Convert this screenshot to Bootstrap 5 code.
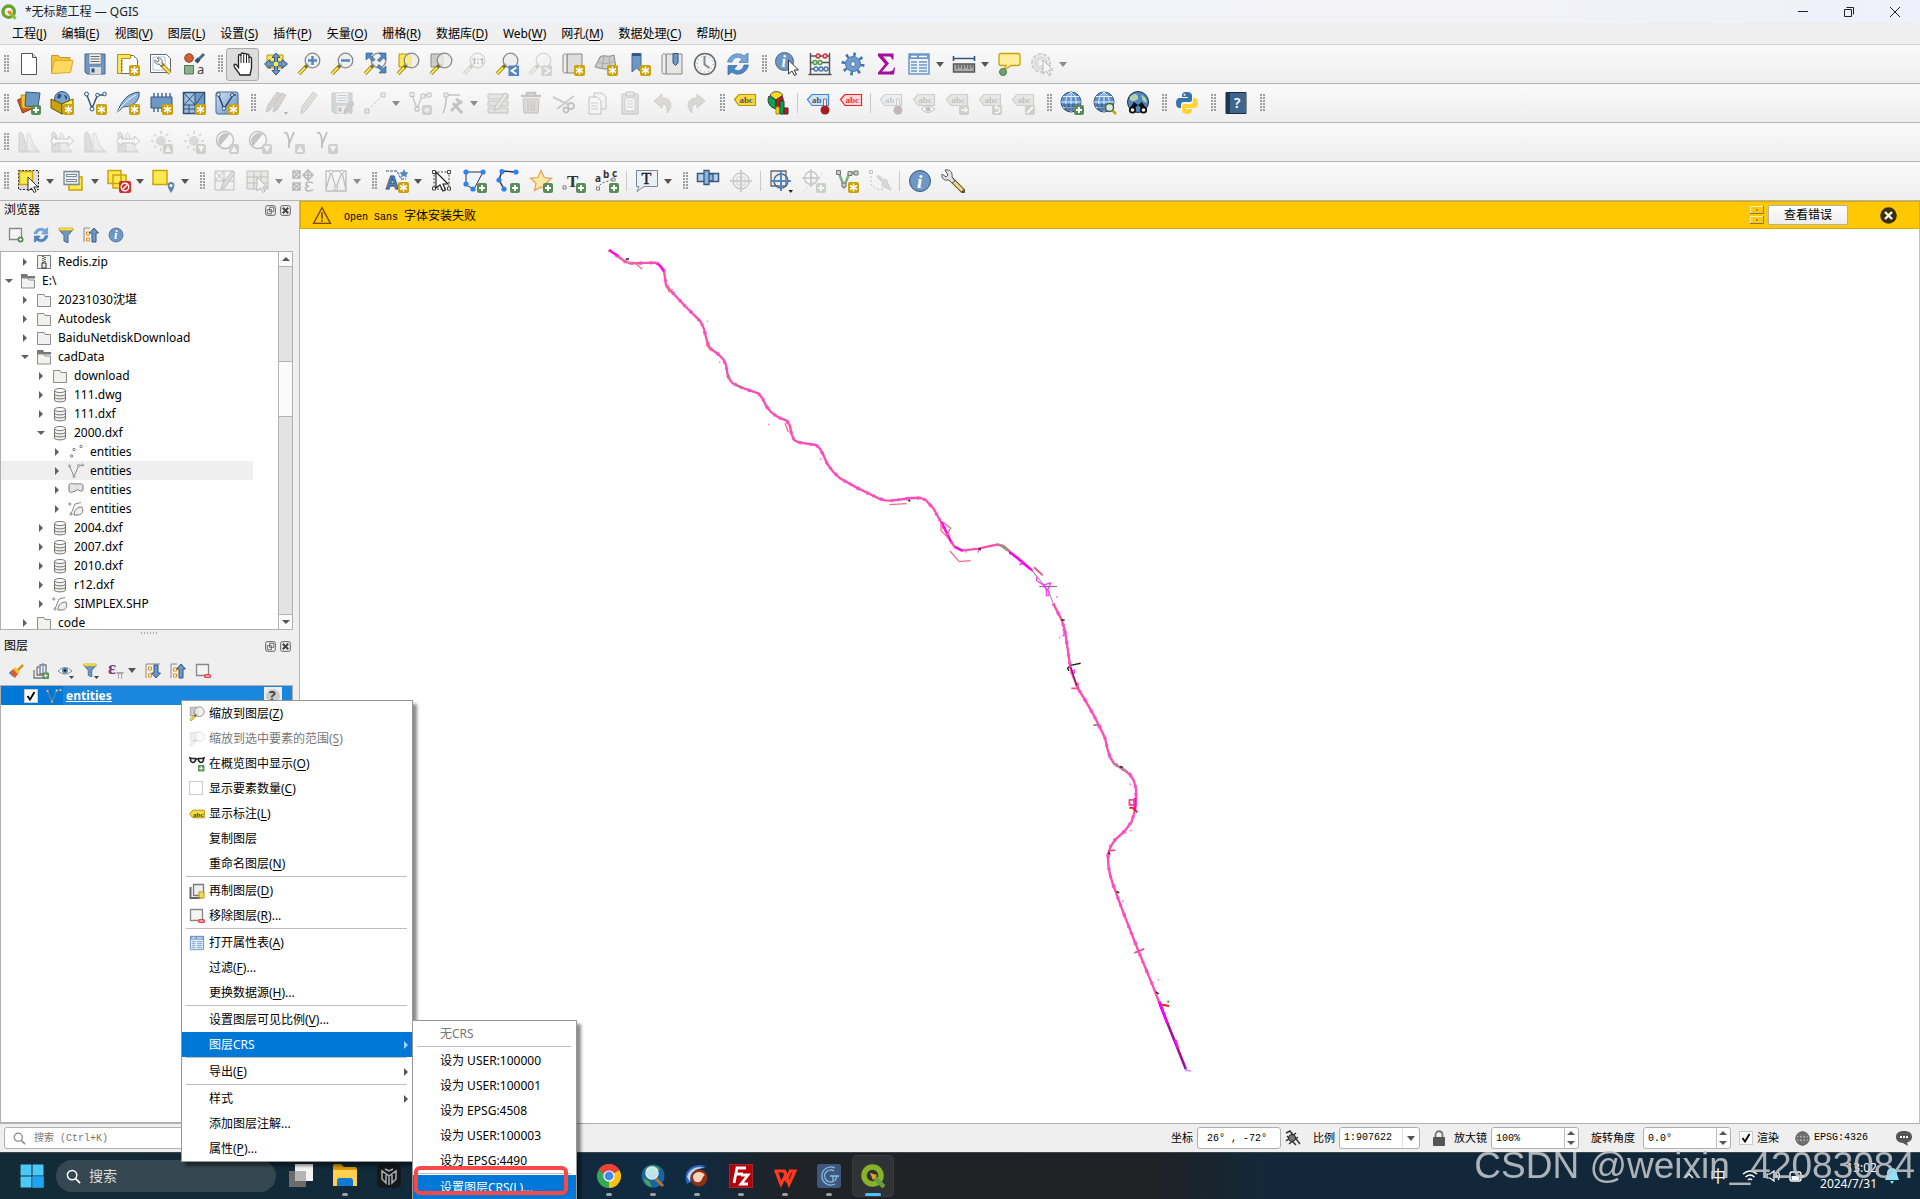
<!DOCTYPE html>
<html lang="zh-CN">
<head>
<meta charset="utf-8">
<meta name="viewport" content="width=device-width, initial-scale=1">
<title>*无标题工程 — QGIS</title>
<link href="https://cdn.jsdelivr.net/npm/bootstrap@5.3.0/dist/css/bootstrap.min.css" rel="stylesheet">
<style>
:root{--ui:"Noto Sans","Noto Sans CJK SC",sans-serif;--song:"Liberation Mono","Noto Sans CJK SC",monospace}
body{font-family:var(--ui);font-size:12px;line-height:16px;color:#000;background:#efefef}
svg{display:block;flex:none}
button{font:inherit;color:inherit;background:none;border:0;padding:0}
u{text-underline-offset:2px}
.titlebar{height:23px;background:linear-gradient(90deg,#eef3fb,#f2f3f8 40%,#f2f2f7 80%,#eef1fb);padding:0 2px 0 1px;color:#222}
.winbtn{width:46px;height:21px;display:grid;place-items:center}
.menubar{height:22px;background:#efefef;border-bottom:1px solid #d3d3d3;padding-left:12px;gap:15px}
.menubar a{color:#000;text-decoration:none;line-height:21px}
.toolrow{height:39px;background:linear-gradient(#fafafa,#eee);border-bottom:1px solid #b4b4b4}
.grip{width:5px;height:18px;margin:0 3px 0 4px;background:radial-gradient(circle at 1px 1px,#9c9c9c 0 .7px,transparent 1px) 0 0/3px 3px}
.tb{width:33px;height:33px;display:grid;place-items:center;border:1px solid transparent;border-radius:3px}
.tb svg{width:24px;height:24px}
.tb.drop{width:45px;grid-template-columns:31px 12px}
.tb.drop::after,.caret::after{content:"";border:4px solid transparent;border-top:5px solid #555;border-bottom:0}
.tb.pressed{background:#dcdcdc;border-color:#ababab}
.off svg{opacity:.3;filter:grayscale(.8)}
.tb.drop.off::after{border-top-color:#8b8b8b}
.tsep{width:1px;height:20px;margin:0 3px;background:#c9c9c9}
.dock{width:300px;border-right:1px solid #b4b4b4;flex:none}
.dockhead{padding:0 8px 0 4px}
.dockhead.h-a{height:18px}
.dockhead.h-b{height:20px}
.dockbar{padding-left:3px}
.dockbar.h-a{height:32px}
.dockbar.h-b{height:29px}
.mini{width:25px;height:25px;display:grid;place-items:center}
.mini svg{width:16px;height:16px}
.panelbox{background:#fff;border:1px solid #b0b0b0;margin-right:6px;min-height:0;overflow:hidden}
.grow-a{flex:379 1 0}
.grow-b{flex:438 1 0}
.split{height:6px;display:grid;place-items:center}
.split i{width:17px;height:2px;background:repeating-linear-gradient(90deg,#aaa 0 1px,transparent 1px 3px)}
.tree{min-width:0;overflow:hidden}
.trow{height:19px;gap:6px;white-space:nowrap;margin-right:25px}
.trow svg{width:16px;height:16px}
.trow.cur{background:#efefef}
.trow .tw{width:11px;height:19px;display:grid;place-items:center}
.tw::after{content:"";border:4px solid transparent;border-left:4px solid #606060;border-right:0}
.tw.open::after{border:4px solid transparent;border-top:4px solid #606060;border-bottom:0}
.lv0{padding-left:2px}.lv1{padding-left:18px}.lv2{padding-left:34px}.lv3{padding-left:50px}
.vscroll{width:14px;border-left:1px solid #b4b4b4;background:#e3e3e3;flex:none}
.vscroll button{height:14px;width:13px;background:#fbfbfb;display:grid;place-items:center}
.vthumb{height:56px;background:#fbfbfb;border:solid #b4b4b4;border-width:1px 0}
.vgap-a{flex:95 1 0;border-top:1px solid #b4b4b4}
.vgap-b{flex:200 1 0;border-bottom:1px solid #b4b4b4}
.up::after{content:"";border:4px solid transparent;border-bottom:4px solid #555;border-top:0}
.dn::after{content:"";border:4px solid transparent;border-top:4px solid #555;border-bottom:0}
.layer{height:19px;background:linear-gradient(90deg,#0078d7 0 62px,#1a86dd 62px);color:#fff;padding:0 10px 0 23px}
.tick{appearance:none;width:14px;height:14px;margin:0;background:#fff;border:1px solid #c8c8c8;flex:none}
.tick:checked{background:#fff url("data:image/svg+xml,%3Csvg xmlns='http://www.w3.org/2000/svg' viewBox='0 0 12 12'%3E%3Cpath d='M2.500 6l2.500 3.500L9.500 2' fill='none' stroke='%23000' stroke-width='1.800'/%3E%3C/svg%3E")}
.song{font-family:var(--song);font-size:10px}
.song b,.zh{font-weight:400;font-size:12px}
.msgbar{height:28px;background:#ffc800;border:1px solid #dba900;padding:0 22px 0 11px}
.msgbtn{width:80px;height:20px;border:1px solid #b0b0b0;border-radius:2px;background:linear-gradient(#fff,#ededed)}
.mapview{background:#fff;border-right:1px solid #c0c0c0;min-height:0}
.statusbar{height:29px;border-top:1px solid #b0b0b0;background:#efefef;padding:0 8px 0 4px}
.fld{height:22px;background:#fff;border:1px solid #b0b0b0;border-radius:3px}
.fld input,.fld select{border:0;outline:0;background:none;appearance:none;font-family:var(--song);font-size:10px;padding:0 0 0 4px;height:20px;min-width:0;color:#000}
.fld.quick{width:250px}
.fld .w-xy{width:82px;padding-left:9px}
.fld .w-sc{width:62px}
.fld .w-sp{width:72px}
.spin{width:14px;border-left:1px solid #c0c0c0}
.spin button{height:10px;display:grid;place-items:center}
.s11{font-size:11px;white-space:nowrap}
.taskbar{height:47px;border-top:1px solid #3c474b;background:linear-gradient(90deg,#122b36 0,#12293a 20%,#102a40 36%,#1f2226 41%,#202124 60%,#12283a 66%,#11273a);color:#fff;padding-left:10px}
.tk{width:44px;height:40px;margin-top:3px;display:grid;place-items:center;position:relative;border-radius:4px}
.tk svg{width:24px;height:24px}
.tk.run::after{content:"";position:absolute;bottom:0;width:6px;height:3px;border-radius:2px;background:#9aa0a4}
.tk.on{width:40px;margin-left:2px;background:#303236;box-shadow:0 0 0 1px #3b3d40}
.tk.on::after{width:16px;background:#4cc2ff}
.after-menu{margin-left:176px}
.find{width:220px;height:32px;border-radius:16px;background:#354751;margin:7px 3px 0 2px;padding-left:10px}
.find input{background:none;border:0;outline:0;color:#e6e6e6;font-size:14px;width:150px;padding:0}
.find input::placeholder{color:#dcdcdc;opacity:1}
.quick input::placeholder{color:#777;opacity:1}
.tray{padding-right:21px}
.watermark{position:absolute;right:5px;bottom:12px;font:37px/42px "Liberation Sans",sans-serif;color:#c3c7ca;opacity:.88;pointer-events:none;white-space:nowrap}
.ctx{position:absolute;display:block;border:1px solid #979797;border-radius:0;background:#fff;padding:0;font-size:12px;box-shadow:4px 4px 3px rgba(0,0,0,.45);color:#000}
.ctx-main{left:181px;top:700px;width:232px;z-index:5}
.ctx-sub{left:412px;top:1020px;width:165px;z-index:6}
.ctx .dropdown-item{height:25px;padding:0 4px 0 7px;display:flex;align-items:center;color:#000;gap:4px;line-height:16px}
.ctx-sub .dropdown-item{padding-left:27px}
.ctx .dropdown-item.gray{color:#777}
.ctx .dropdown-item.active{background:#0078d7;color:#fff}
.ctx .ic{width:16px;height:16px;flex:none}
.ctx .ic svg{width:16px;height:16px}
.ctx .rule{height:2px;border-top:1px solid #bdbdbd;margin:0 5px 0 4px}
.ctx .more{margin-left:auto;border:4px solid transparent;border-left:4px solid #555;border-right:0}
.ctx .active .more{border-left-color:#9fd2ff}
.redbox{position:absolute;left:414px;top:1166px;width:154px;height:29px;border:4px solid #f84848;border-radius:6px;z-index:7}
</style>
<script src="https://cdn.jsdelivr.net/npm/bootstrap@5.3.0/dist/js/bootstrap.bundle.min.js"></script>
</head>
<body>
<svg width="0" height="0" class="position-absolute" aria-hidden="true"><defs>
<linearGradient id="gb" x1="0" y1="0" x2="1" y2="1"><stop offset="0" stop-color="#d5e4f3"/><stop offset="1" stop-color="#5d8fc6"/></linearGradient>
<g id="bnew"><rect x="13" y="13" width="11" height="11" rx="2" fill="#c9a20c"/><path d="M18.500 14.500v8M15 16.500l7 4M15 20.500l7-4" stroke="#fff" stroke-width="1.500"/></g>
<g id="badd"><rect x="14" y="14" width="10" height="10" rx="2" fill="#5a8c5a"/><path d="M19 16v6M16 19h6" stroke="#fff" stroke-width="2"/></g>
<g id="bgray"><rect x="14" y="14" width="10" height="10" rx="2" fill="#7c8270"/></g>
<g id="mag"><path d="M9.500 14 2 21.800" stroke="#8c7100" stroke-width="3.600"/><path d="M8 15.500 2 21.800" stroke="#fce94f" stroke-width="2"/><path d="m9.500 14 2-2" stroke="#222" stroke-width="3"/><circle cx="15.500" cy="8.500" r="7.300" fill="#eeeeec" fill-opacity=".8" stroke="#888a85" stroke-width="1.300"/></g>
<g id="tag"><path d="M1.500 8.500 6 3.500h16.500v11H6z" stroke-width="1.200"/></g>
<g id="vee"><path d="M3.500 3 9 17.500 14.500 4h7" fill="none"/></g>
<g id="ptr"><path d="M10 8v14l3.500-3 2.500 4.500 2-1-2.300-4.500H20z" fill="#fff" stroke="#333" stroke-width="1"/></g>
<g id="glb"><circle cx="11" cy="11" r="10" fill="#5d94cf" stroke="#33507d"/><path d="M11 1v20M1 11h20M3 5.500h16M3 16.500h16M11 1C4 6 4 16 11 21M11 1c7 5 7 15 0 20" fill="none" stroke="#e8f1fa" stroke-width="1"/><path d="M3 13h16c-1 5-5 8-8 8s-7-3-8-8z" fill="#24466f" opacity=".5"/></g>
<g id="hist"><path d="M2 21V4c0-3 4-3 5 4l2 8 3 5z" fill="#a9b5a2" stroke="#777"/><path d="M10 21V5c1-4 3-2 4 3l3 8 5 5z" fill="#ddd" stroke="#999"/><path d="M1 22h22" stroke="#888"/></g>
<g id="sun"><circle cx="12" cy="11" r="5" fill="#a59f74"/><path d="M12 1v3M12 18v3M2 11h3M19 11h3M5 4l2 2M17 6l2-2M5 18l2-2" stroke="#a59f74" stroke-width="2"/></g>
<g id="gfold"><path d="M1.500 14.500v-12h6.500l1 2h5.500v10z" fill="#f1f1f0" stroke="#8c8c8c"/></g>

<symbol id="new" viewBox="0 0 24 24"><path d="M4.500 1.500h11l4 4v17h-15z" fill="#fff" stroke="#555"/><path d="M15.500 1.500v4h4" fill="#ddd" stroke="#555"/></symbol>
<symbol id="open" viewBox="0 0 24 24"><path d="M1.500 21V3.500h7l1.500 2h10V8" fill="#f3c33c" stroke="#c79a2a"/><path d="M1.500 21.500 4.500 8.500h18.500l-2.500 12z" fill="#ffd95e" stroke="#d9a82d"/></symbol>
<symbol id="save" viewBox="0 0 24 24"><path d="M2 2h20v20H4l-2-2z" fill="#6d97c4" stroke="#47698f"/><path d="M6 2h12v10H6z" fill="#f2f2f2" stroke="#777" stroke-width=".6"/><path d="M7.500 4.500h9M7.500 7h9M7.500 9.500h9" stroke="#666"/><path d="M7 15h11v7H7z" fill="#ddd"/><path d="M8.500 16.500h3v4h-3z" fill="#2f4f75"/></symbol>
<symbol id="layout" viewBox="0 0 24 24"><path d="M1.500 3.500h16l4 4v14h-20z" fill="#fff" stroke="#666"/><path d="M1.500 2.500h13v4h-9v15h-4z" fill="#fce36a" stroke="#b8940c"/><path d="M5 9h2M5 12h2M5 15h2M5 18h2" stroke="#8c7100"/><use href="#bnew"/></symbol>
<symbol id="layman" viewBox="0 0 24 24"><path d="M1.500 2.500h16l4 4v14h-20z" fill="#fff" stroke="#666"/><path d="M4 5h12v13H4z" fill="#fff" stroke="#a9c0ee"/><path d="m12 12 9 9" stroke="#8c7100" stroke-width="4"/><path d="m14 14 7 7" stroke="#f5d95e" stroke-width="2.500"/><path d="M8 6c3-1 6 2 5 5l1 2-2 1-2-2c-3 1-5-2-4-4l3 2 1-2z" fill="#eee" stroke="#555" stroke-width=".8"/></symbol>
<symbol id="style" viewBox="0 0 24 24"><circle cx="7" cy="6" r="4.300" fill="#d35f35" stroke="#9c3d1a"/><path d="M2.500 13.500h9v8.500h-9z" fill="#8caf8c" stroke="#4f7a4f"/><path d="m14 10 8-8" stroke="#47698f" stroke-width="3"/><path d="m14 10 3-3" stroke="#2f4f75" stroke-width="4"/><text x="15" y="22" font-family="Noto Sans" font-size="13" fill="#444">a</text></symbol>
<symbol id="hand" viewBox="0 0 24 24"><path d="M9 23c-1-3-6-7-6-9.500 0-1.700 2-1.700 3 0l1.500 2V4c0-2 2.300-2 2.500 0V2.500c0-2 2.500-2 2.700 0 .2-1.500 2.700-1.500 2.800.5.300-1.300 2.500-1 2.500.8V6c.5-1.300 2.500-1 2.500.7V16l-1.500 7z" fill="#fff" stroke="#222" stroke-width="1.300"/><path d="M10 4v7M12.700 3v8M15.500 3v8M18 5v6" stroke="#222"/></symbol>
<symbol id="panto" viewBox="0 0 24 24"><path d="M3 3h16v13H3z" fill="#fce94f" stroke="#b8940c"/><path d="m12 1 4 4.500h-2.500V10H18V7.500l5.500 4.500-5.500 4.500V14h-4.500v4.500H16L12 23l-4-4.500h2.500V14H6v2.500L.5 12 6 7.500V10h4.500V5.500H8z" fill="#6d97c4" stroke="#2f5586"/><path d="M10 10h4v4h-4z" fill="#fce94f"/></symbol>
<symbol id="zin" viewBox="0 0 24 24"><use href="#mag"/><path d="M15.500 4v9M11 8.500h9" stroke="#5387c2" stroke-width="2.500"/></symbol>
<symbol id="zout" viewBox="0 0 24 24"><use href="#mag"/><path d="M11 8.500h9" stroke="#5387c2" stroke-width="2.500"/></symbol>
<symbol id="zfull" viewBox="0 0 24 24"><use href="#mag"/><path d="M3 1h7L8 3.500l4 4-2 2-4-4L3 8zM23 1v7l-2.500-2-4 4-2-2 4-4L16 1zM23 21h-7l2-2.500-4-4 2-2 4 4 3-2.500z" fill="#5387c2" stroke="#2f5586" stroke-width=".6"/></symbol>
<symbol id="zsel" viewBox="0 0 24 24"><path d="M3 2h12v13H3z" fill="#fce94f" stroke="#b8940c"/><use href="#mag"/><path d="M10 4h5v9h-5z" fill="#fce94f" opacity=".5"/></symbol>
<symbol id="zlay" viewBox="0 0 24 24"><path d="M2 2h12v13H2z" fill="#ccc" stroke="#888"/><use href="#mag"/></symbol>
<symbol id="z11" viewBox="0 0 24 24"><use href="#mag"/><text x="9.500" y="12" font-family="Noto Sans" font-weight="700" font-size="9" fill="#333">1:1</text></symbol>
<symbol id="zlast" viewBox="0 0 24 24"><use href="#mag"/><path d="M13.500 13.500H24V24H13.500z" fill="#5387c2"/><path d="m21.500 15.500-5 3.200 5 3.200" fill="none" stroke="#fff" stroke-width="1.800"/></symbol>
<symbol id="znext" viewBox="0 0 24 24"><use href="#mag"/><path d="M13.500 13.500H24V24H13.500z" fill="#888"/><path d="m16.500 15.500 5 3.200-5 3.200" fill="none" stroke="#fff" stroke-width="1.800"/></symbol>
<symbol id="nmap" viewBox="0 0 24 24"><path d="M6 2h15v19H6z" fill="#ddd" stroke="#888"/><path d="M2 4c0-3 4-3 4 0v17H4c-2 0-2-2-2-3z" fill="#eee" stroke="#888"/><use href="#bnew"/></symbol>
<symbol id="n3d" viewBox="0 0 24 24"><path d="M6 5c4-3 8 1 14-2l2 13c-6 2-14 1-21-1z" fill="#ccc" stroke="#888"/><path d="M4 10c6 3 12 1 17-1M10 4 8 16M15 4l1 13" fill="none" stroke="#aaa"/><use href="#bnew"/></symbol>
<symbol id="nbm" viewBox="0 0 24 24"><path d="M5 1.500h9V20l-4.500-4L5 20z" fill="#6d97c4" stroke="#47698f"/><path d="M5 1.500h9V4H5z" fill="#34577f"/><use href="#bnew"/></symbol>
<symbol id="sbm" viewBox="0 0 24 24"><path d="M6 2h16v20H6z" fill="#e6e6e6" stroke="#888"/><path d="M2 4c0-3 4-3 4 0v18H4c-2 0-2-2-2-3z" fill="#eee" stroke="#888"/><path d="M13 1.500h5V11l-2.500 2.500L13 11z" fill="#6d97c4" stroke="#34577f"/></symbol>
<symbol id="clock" viewBox="0 0 24 24"><circle cx="12" cy="12" r="10.500" fill="#f4f4f4" stroke="#666" stroke-width="1.500"/><circle cx="12" cy="12" r="8" fill="none" stroke="#6d97c4" stroke-dasharray="1 3.200"/><path d="M11.500 4v8.500l5 3.500" fill="none" stroke="#888" stroke-width="2"/></symbol>
<symbol id="ref" viewBox="0 0 24 24"><path d="M1.500 10C4 1 14 0 18 4l4-3v9.500h-9L16 7C12 3.500 7 6 6 10z" fill="#74a7dd" stroke="#4677ad" stroke-width=".7"/><path d="M22.500 13C20 23 10 24 6 20l-4 3v-9.500h9L8 17c4 3.500 9 1 10-4z" fill="#4b86c5" stroke="#3a699e" stroke-width=".7"/></symbol>
<symbol id="ident" viewBox="0 0 24 24"><circle cx="9.500" cy="9.500" r="9" fill="#6d97c4" stroke="#47698f"/><text x="6.500" y="15" font-family="Liberation Serif" font-style="italic" font-weight="700" font-size="16" fill="#fff">i</text><use href="#ptr" x="3.500"/></symbol>
<symbol id="abac" viewBox="0 0 24 24"><path d="M2.500 1v21M21.500 1v21M.5 22.500h23M2 4h20M2 10.500h20M2 17h20" stroke="#555" stroke-width="1.500"/><g stroke-width="1.300"><g fill="#f7c6c6" stroke="#c33"><circle cx="10" cy="4" r="2"/><circle cx="17" cy="4" r="2"/></g><g fill="#cfe8cf" stroke="#4f9a4f"><circle cx="7" cy="10.500" r="2"/><circle cx="12" cy="10.500" r="2"/></g><g fill="#d5e4f3" stroke="#4677ad"><circle cx="8" cy="17" r="2"/><circle cx="13" cy="17" r="2"/><circle cx="18" cy="17" r="2"/></g></g></symbol>
<symbol id="gear" viewBox="0 0 24 24"><circle cx="12" cy="12" r="9.500" fill="none" stroke="#4677ad" stroke-width="4" stroke-dasharray="2.600 4.850"/><circle cx="12" cy="12" r="7.500" fill="#6d9bd0" stroke="#4677ad"/><circle cx="12" cy="12" r="2.500" fill="#f4f4f4" stroke="#4677ad"/></symbol>
<symbol id="sum" viewBox="0 0 24 24"><path d="M4 1.500h15.500v6H18c-.5-2.500-1.500-3-4-3H9l6 7-7 8h7c3 0 4-1 5-4h1l-1 7H4v-2l7-8.500-7-8z" fill="#a50e9e"/></symbol>
<symbol id="table" viewBox="0 0 24 24"><path d="M2 2h20v20H2z" fill="#e9f1fa" stroke="#6d97c4" stroke-width="1.500"/><path d="M2 2h20v5H2z" fill="#6d97c4"/><path d="M4 4.500h6M12 4.500h8" stroke="#fff" stroke-width="1.500"/><path d="M4 10h6M12 10h8M4 13h6M12 13h8M4 16h6M12 16h8M4 19h6M12 19h8" stroke="#6d97c4" stroke-width="1.300"/></symbol>
<symbol id="meas" viewBox="0 0 24 24"><path d="M1.500 6.500h21M1.500 4v5M22.500 4v5" stroke="#34577f" stroke-width="1.600"/><path d="M1.500 12h21v8h-21z" fill="#aaa" stroke="#555" stroke-width="1.400"/><path d="M5 13v4M8 13v3M11 13v4M14 13v3M17 13v4M20 13v3" stroke="#444"/></symbol>
<symbol id="tip" viewBox="0 0 24 24"><path d="M4 1.500h17q2 0 2 2v8q0 2-2 2h-7L6 19l3-5.500H4q-2 0-2-2v-8q0-2 2-2z" fill="#fcee9a" stroke="#c9a20c" stroke-width="1.300"/><circle cx="6" cy="20" r="3.500" fill="#6fa06f" stroke="#4f7a4f"/></symbol>
<symbol id="run" viewBox="0 0 24 24"><circle cx="11" cy="11" r="9" fill="#ddd" stroke="#777" stroke-width="2" stroke-dasharray="4 1.500"/><circle cx="11" cy="11" r="6" fill="#bbb" stroke="#777"/><path d="m9 8 6 3-6 3z" fill="#fff"/><use href="#ptr" x="3"/></symbol>

<symbol id="dsm" viewBox="0 0 24 24"><path d="m.5 9 9-4 5 13-9 4z" fill="#c75a2a" stroke="#8f3b14"/><path d="m4 4 11 0 1 13H5z" fill="#f3c52c" stroke="#b8940c"/><path d="m9 1 14 1-2 14-13-1z" fill="#6d97c4" stroke="#34577f"/><use href="#badd"/></symbol>
<symbol id="geopk" viewBox="0 0 24 24"><circle cx="12" cy="8" r="7.500" fill="#7aa3d0" stroke="#34577f"/><path d="M8 3c3-1 4 1 3 3s-4 2-4 0zM14 4c3 0 4 3 2 5z" fill="#2f4f75"/><path d="M1 8l11 5v10L1 17z" fill="#c9a20c" stroke="#6b5500"/><path d="m12 13 11-5v9l-11 6z" fill="#fce94f" stroke="#6b5500"/><use href="#bnew"/></symbol>
<symbol id="nshp" viewBox="0 0 24 24"><use href="#vee" stroke="#34577f" stroke-width="1.500"/><g fill="#eee" stroke="#34577f"><circle cx="3.500" cy="3" r="2"/><circle cx="9" cy="18" r="2"/><circle cx="14.500" cy="4" r="1.800"/><circle cx="21.500" cy="3" r="1.800"/></g><use href="#bnew"/></symbol>
<symbol id="feath" viewBox="0 0 24 24"><path d="M1 22C5 10 12 2 23 1c1 6-3 12-9 14-4 1-7 0-9 3z" fill="#8fb3da" stroke="#34577f"/><path d="M1 22C6 14 13 7 20 4" fill="none" stroke="#fff"/><use href="#bnew"/></symbol>
<symbol id="chip" viewBox="0 0 24 24"><path d="M5 2v19M9 2v19M13 2v19M17 2v19M21 2v12" stroke="#34577f" stroke-width="1.300"/><path d="M2 6h21v11H2z" fill="#6d97c4" stroke="#34577f"/><use href="#bnew"/></symbol>
<symbol id="mesh" viewBox="0 0 24 24"><path d="M1.500 1.500h21v21h-21z" fill="#9fbfe2" stroke="#2f4f75" stroke-width="1.500"/><path d="M13 2h9v12h-9z" fill="#6d97c4"/><path d="M1.500 14h21M13 1.500v21M2 2l11 12M13 2 2 14M22 2l-9 12M7 14v8M2 18h11" fill="none" stroke="#2f4f75"/><use href="#bnew"/></symbol>
<symbol id="gpx" viewBox="0 0 24 24"><rect x="1" y="1" width="22" height="22" rx="2" fill="url(#gb)" stroke="#47698f"/><path d="M3 3 9 18 18 4h3" fill="none" stroke="#2f4f75" stroke-width="1.700"/><g fill="#fff" stroke="#2f4f75"><circle cx="3.500" cy="3.500" r="1.800"/><circle cx="9" cy="17.500" r="1.800"/><circle cx="17" cy="4" r="1.500"/></g><use href="#bnew"/></symbol>
<symbol id="pens" viewBox="0 0 24 24"><path d="m2 21 2-7L13 1l4 2L6 19z" fill="#a9827c" stroke="#664"/><path d="m9 21 1-6 8-13 4 2-9 15z" fill="#a9827c" stroke="#664"/><path d="M20 21h4l-2 3z" fill="#222"/></symbol>
<symbol id="pen" viewBox="0 0 24 24"><path d="m4 23 1-7L16 1l4 3L9 19z" fill="#c9b98c" stroke="#665"/><path d="M7 17 18 3" stroke="#887"/></symbol>
<symbol id="saveed" viewBox="0 0 24 24"><use href="#save"/><path d="m14 23 1-5 7-8 2 3-7 8z" fill="#a66" stroke="#555"/></symbol>
<symbol id="lin" viewBox="0 0 24 24"><path d="M4 20 20 4" stroke="#555" stroke-dasharray="3 2"/><path d="M2 18h4v4H2zM18 2h4v4h-4z" fill="#ddd" stroke="#444"/></symbol>
<symbol id="vtx" viewBox="0 0 24 24"><use href="#vee" stroke="#555" stroke-width="1.300"/><path d="M2 1.500h4v4H2zM7 16h4v4H7zM13 3h4v4h-4zM19 2h4v4h-4z" fill="#ddd" stroke="#444"/><use href="#bgray"/><path d="M19 16v6M16 17.500l6 3M16 20.500l6-3" stroke="#fff"/></symbol>
<symbol id="vtool" viewBox="0 0 24 24"><path d="M2 22C6 14 5 8 5 4h14" fill="none" stroke="#555" stroke-width="1.500"/><path d="M3 2h4v4H3z" fill="#ddd" stroke="#444"/><path d="M21 22 12 12M10 20l9-9M15 8l6 4" stroke="#555" stroke-width="3"/></symbol>
<symbol id="multi" viewBox="0 0 24 24"><path d="M2 3h20v5H2zM2 10h20v5H2zM2 17h20v5H2z" fill="#c9c28c" stroke="#555"/><path d="m8 20 2-6 9-12 3 2-9 13z" fill="#ccb" stroke="#555"/></symbol>
<symbol id="trash" viewBox="0 0 24 24"><path d="M2 5h20M8 5V2h8v3" fill="none" stroke="#844" stroke-width="2.500"/><path d="M4 8h16l-1 14H5z" fill="#c99" stroke="#844"/><path d="M9 10v10M12 10v10M15 10v10" stroke="#844"/></symbol>
<symbol id="cut" viewBox="0 0 24 24"><path d="m1 6 16 8M5 18 22 5" stroke="#777" stroke-width="2"/><circle cx="19" cy="15" r="3" fill="none" stroke="#555" stroke-width="1.800"/><circle cx="14" cy="19" r="2.500" fill="none" stroke="#555" stroke-width="1.800"/></symbol>
<symbol id="copy" viewBox="0 0 24 24"><path d="M9 2h8l4 4v12H9z" fill="#eee" stroke="#555"/><path d="M4 6h8l4 4v13H4z" fill="#fff" stroke="#555"/><path d="M6 12h7M6 15h7M6 18h7" stroke="#777"/></symbol>
<symbol id="paste" viewBox="0 0 24 24"><path d="M4 3h16v20H4z" fill="#bba" stroke="#555"/><path d="M7 7h10v13H7z" fill="#fff" stroke="#777"/><path d="M8 1h8v4H8z" fill="#ccc" stroke="#555"/><path d="M9 10h6M9 13h6M9 16h6" stroke="#777"/></symbol>
<symbol id="undo" viewBox="0 0 24 24"><path d="m3 10 8-7v4c9 0 12 7 5 15 1-6-1-9-5-9v4z" fill="#b39b70" stroke="#776"/></symbol>
<symbol id="redo" viewBox="0 0 24 24"><path d="m21 10-8-7v4c-9 0-12 7-5 15-1-6 1-9 5-9v4z" fill="#8a9b80" stroke="#676"/></symbol>
<symbol id="lab" viewBox="0 0 24 24"><use href="#tag" fill="#f5dc3c" stroke="#b8940c"/><text x="6.500" y="12" font-family="Liberation Serif" font-weight="700" font-size="9" fill="#555">abc</text></symbol>
<symbol id="diag" viewBox="0 0 24 24"><path d="M10 9 4 4c4-5 10-4 13 0z" fill="#fce01a" stroke="#555"/><path d="M10 9v9C2 16 1 9 3 5z" fill="#00a850" stroke="#333"/><path d="M10 9v9c6-3 9-9 6-13z" fill="#c8141c" stroke="#333"/><path d="M10 16h3v7h-3z" fill="#fce01a" stroke="#a80"/><path d="M14 10h4v13h-4z" fill="#00a850" stroke="#333"/><path d="M18 17h4v6h-4z" fill="#c8141c" stroke="#333"/></symbol>
<symbol id="pin" viewBox="0 0 24 24"><use href="#tag" fill="#cfe3fb" stroke="#3f88e0"/><text x="6" y="12" font-family="Liberation Serif" font-weight="700" font-size="9" fill="#555">ab</text><path d="M17.500 8h3v8h-3z" fill="#eee" stroke="#777"/><circle cx="19" cy="19" r="4.500" fill="#a51d1d"/></symbol>
<symbol id="labr" viewBox="0 0 24 24"><use href="#tag" fill="#ffd9d9" stroke="#e22"/><text x="6.500" y="12" font-family="Liberation Serif" font-weight="700" font-size="9" fill="#e33">abc</text></symbol>
<symbol id="labx" viewBox="0 0 24 24"><use href="#tag" fill="#c9c89b" stroke="#775"/><text x="6.500" y="12" font-family="Liberation Serif" font-weight="700" font-size="9" fill="#444">abc</text><use href="#bgray"/><path d="M16 19h6M19.500 16.500 22 19l-2.500 2.500" fill="none" stroke="#fff" stroke-width="1.500"/></symbol>
<symbol id="labrot" viewBox="0 0 24 24"><use href="#tag" fill="#c9c89b" stroke="#775"/><text x="6.500" y="12" font-family="Liberation Serif" font-weight="700" font-size="9" fill="#444">abc</text><use href="#bgray"/><path d="M17 21.500c6 1 6-5 2-5h-2M19 14.500l-2 2 2 2" fill="none" stroke="#fff" stroke-width="1.300"/></symbol>
<symbol id="labed" viewBox="0 0 24 24"><use href="#tag" fill="#c9c89b" stroke="#775"/><text x="6.500" y="12" font-family="Liberation Serif" font-weight="700" font-size="9" fill="#444">abc</text><use href="#bgray"/><path d="m16 22 6-6" stroke="#fff" stroke-width="2"/></symbol>
<symbol id="laby" viewBox="0 0 24 24"><use href="#tag" fill="#c9c89b" stroke="#775"/><text x="6.500" y="12" font-family="Liberation Serif" font-weight="700" font-size="9" fill="#444">abc</text><path d="M9 18q7-7 14 0-7 7-14 0z" fill="#fff" stroke="#555"/><circle cx="16" cy="18" r="2.500" fill="#555"/></symbol>
<symbol id="wadd" viewBox="0 0 24 24"><use href="#glb"/><use href="#badd"/></symbol>
<symbol id="wfind" viewBox="0 0 24 24"><use href="#glb"/><path d="m19 19 4 4" stroke="#c9a20c" stroke-width="2.500"/><circle cx="16.500" cy="16.500" r="4" fill="#dfe9e0" stroke="#3d6b3d" stroke-width="1.500"/></symbol>
<symbol id="wbin" viewBox="0 0 24 24"><circle cx="12" cy="11" r="10.500" fill="#4f86c0" stroke="#1c2f4a"/><path d="M4 6c4-4 7-4 8 0s-6 5-8 3zM15 4c4 1 6 5 6 8l-4-2z" fill="#b6d2a0"/><path d="m8 11 4 3 4-3 4 6h-5l-3-3-3 3H4z" fill="#111"/><circle cx="6.500" cy="19" r="3.600" fill="#111"/><circle cx="17.500" cy="19" r="3.600" fill="#111"/><circle cx="6.500" cy="19" r="1.800" fill="#eee"/><circle cx="17.500" cy="19" r="1.800" fill="#eee"/></symbol>
<symbol id="py" viewBox="0 0 24 24"><path d="M12 1c-5 0-5 2-5 5h6v1H4c-4 0-4 10 0 10h2v-3q0-3 3-3h6q2 0 2-2V5c0-3-2-4-5-4z" fill="#3774a8"/><path d="M12 23c5 0 5-2 5-5h-6v-1h9c4 0 4-10 0-10h-2v3q0 3-3 3H9q-2 0-2 2v4c0 3 2 4 5 4z" fill="#ffd43b"/><circle cx="9.500" cy="3.800" r="1" fill="#fff"/></symbol>
<symbol id="help" viewBox="0 0 24 24"><path d="M2 1.500h20v21H2z" fill="#22364f" stroke="#1b2a3d"/><path d="M6 2h16v20H6z" fill="#3f658f"/><text x="10" y="17" font-family="Noto Sans" font-weight="600" font-size="14" fill="#fff">?</text></symbol>

<symbol id="h1" viewBox="0 0 24 24"><use href="#hist"/><path d="m14 15 6 6" stroke="#c55" stroke-dasharray="1.500 1.500"/></symbol>
<symbol id="h2" viewBox="0 0 24 24"><use href="#hist"/><path d="m.5 11 5-5v3h13V6l5 5-5 5v-3h-13v3z" fill="#fff" stroke="#666"/></symbol>
<symbol id="h3" viewBox="0 0 24 24"><use href="#hist"/></symbol>
<symbol id="su" viewBox="0 0 24 24"><use href="#sun"/><use href="#bgray"/><path d="m19 16 3 6h-6z" fill="#fff"/></symbol>
<symbol id="sd" viewBox="0 0 24 24"><use href="#sun"/><use href="#bgray"/><path d="m19 22 3-6h-6z" fill="#fff"/></symbol>
<symbol id="cu" viewBox="0 0 24 24"><circle cx="10" cy="10" r="8.500" fill="#fff" stroke="#444" stroke-width="1.400"/><path d="M5 16A8 8 0 0 1 15 4z" fill="#555"/><use href="#bgray"/><path d="m19 16 3 6h-6z" fill="#fff"/></symbol>
<symbol id="cd" viewBox="0 0 24 24"><circle cx="10" cy="10" r="8.500" fill="#fff" stroke="#444" stroke-width="1.400"/><path d="M5 16A8 8 0 0 1 15 4z" fill="#555"/><use href="#bgray"/><path d="m19 22 3-6h-6z" fill="#fff"/></symbol>
<symbol id="gu" viewBox="0 0 24 24"><path d="M3 3q4-2 5 8v7M13 2 8 14" fill="none" stroke="#444" stroke-width="1.800"/><use href="#bgray"/><path d="m19 16 3 6h-6z" fill="#fff"/></symbol>
<symbol id="gd" viewBox="0 0 24 24"><path d="M3 3q4-2 5 8v7M13 2 8 14" fill="none" stroke="#444" stroke-width="1.800"/><use href="#bgray"/><path d="m19 22 3-6h-6z" fill="#fff"/></symbol>

<symbol id="sel" viewBox="0 0 24 24"><path d="M1.500 1.500h20v19h-20z" fill="#ddd" stroke="#222" stroke-dasharray="2 1.500"/><path d="M2.500 2.500h13v13h-13z" fill="#fce94f" stroke="#c9a20c" stroke-width="1.500"/><use href="#ptr" x="1"/></symbol>
<symbol id="selv" viewBox="0 0 24 24"><path d="M7 8h13v13H7z" fill="#fce94f" stroke="#c9a20c" stroke-width="1.500"/><path d="M2 2.500h15v13H2z" fill="#e8ecf0" stroke="#7b8794" stroke-width="1.300"/><path d="M4.500 5.500h10v2h-10zM4.500 10.500h10v2h-10z" fill="#fff" stroke="#7b8794"/></symbol>
<symbol id="desel" viewBox="0 0 24 24"><path d="M1 1.500h13v13H1zM6 6h13v13H6z" fill="#fce94f" stroke="#c9a20c" stroke-width="1.500"/><rect x="12" y="12" width="12" height="12" rx="2" fill="#d42c2c"/><circle cx="18" cy="18" r="3.800" fill="none" stroke="#fff" stroke-width="1.400"/><path d="m15.500 20.500 5-5" stroke="#fff" stroke-width="1.400"/></symbol>
<symbol id="selloc" viewBox="0 0 24 24"><path d="M1 1.500h14v14H1z" fill="#fce94f" stroke="#c9a20c" stroke-width="1.500"/><path d="M19 24c-5-7-4-11 0-11s5 4 0 11z" fill="#5c87a5"/><circle cx="19" cy="16.500" r="1.500" fill="#fff"/></symbol>
<symbol id="mesh1" viewBox="0 0 24 24"><path d="M2 2h19v19H2zM2 12h19M11 2v19M2 2l9 10M11 2 2 12M21 2l-9 10" fill="#eee" stroke="#444"/><path d="m8 20 2-6 9-12 3 2-9 13z" fill="#c99" stroke="#555"/></symbol>
<symbol id="mesh2" viewBox="0 0 24 24"><path d="M1 2h21v18H1zM1 8h21M8 2v18M15 2v18M1 14h21" fill="#ccb" stroke="#444"/><use href="#ptr" x="1"/></symbol>
<symbol id="mesh3" viewBox="0 0 24 24"><path d="M2 2h7v7H2zl7 7M9 2 2 9M2 14h7v7H2zl7 7M9 14l-7 7M12 6l5-5 5 5-5 5zM12 6h10M17 1v10M22 14c-8-3-9 3-4 3-6 1-4 7 4 4" fill="none" stroke="#333" stroke-width="1.600"/></symbol>
<symbol id="mesh4" viewBox="0 0 24 24"><path d="M2 2h20v20H2zM2 20 7 3l5 16 6-16 4 18" fill="none" stroke="#444" stroke-width="1.300"/><g fill="#eee" stroke="#444"><circle cx="7" cy="3" r="1.800"/><circle cx="12" cy="19" r="1.800"/><circle cx="18" cy="3" r="1.800"/></g></symbol>
<symbol id="anno" viewBox="0 0 24 24"><path d="M1 2h11l4 8h5" fill="none" stroke="#34577f" stroke-dasharray="3 1"/><path d="m19 0 1.500 3 3 .5-2 2 .5 3-3-1.500-3 1.500.5-3-2-2 3-.5z" fill="#5387c2"/><text x="1" y="20" font-family="Noto Sans" font-weight="700" font-size="18" fill="#5387c2" stroke="#2f4f75" stroke-width=".8">A</text><use href="#bnew"/></symbol>
<symbol id="ansel" viewBox="0 0 24 24"><path d="M4 3h15v17H4z" fill="none" stroke="#444" stroke-dasharray="2 1.500"/><path d="M2.500 1.500h3v3h-3zM17.500 1.500h3v3h-3zM2.500 18h3v3h-3zM17.500 18h3v3h-3z" fill="#fff" stroke="#444"/><path d="M6 3v16l4-3 3 6 2.500-1L13 15h5z" fill="#fff" stroke="#222" stroke-width="1.200"/></symbol>
<symbol id="anpoly" viewBox="0 0 24 24"><path d="M3 3h17l-9 17-8-4z" fill="#eef3fa" stroke="#333"/><g fill="#2b83f6"><circle cx="3" cy="3" r="2.600"/><circle cx="20" cy="3" r="2.600"/><circle cx="3" cy="15" r="2.600"/><circle cx="10" cy="20" r="2.600"/></g><use href="#badd"/></symbol>
<symbol id="anlin" viewBox="0 0 24 24"><path d="M20 3 6 2 3 11l5 9" fill="none" stroke="#333" stroke-width="1.500"/><g fill="#2b83f6"><circle cx="20" cy="3" r="2.600"/><circle cx="6" cy="2.600" r="2.600"/><circle cx="3" cy="11" r="2.600"/><circle cx="8" cy="20" r="2.600"/></g><use href="#badd"/></symbol>
<symbol id="star" viewBox="0 0 24 24"><path d="m12 1.500 3.300 7 7.200.8-5.300 5 1.500 7.200-6.700-3.600L5.500 21.500 7 14.300l-5.500-5 7.200-.8z" fill="#fbe8a6" stroke="#e0a05a" stroke-width="1.200"/><use href="#badd"/></symbol>
<symbol id="ant" viewBox="0 0 24 24"><text x="5" y="18" font-family="Liberation Serif" font-weight="700" font-size="17" fill="#333">T</text><path d="M1 17h3v3H1z" fill="#fff" stroke="#777"/><use href="#badd"/></symbol>
<symbol id="antl" viewBox="0 0 24 24"><path d="M3 20c2-8 8-6 15-10" fill="none" stroke="#555" stroke-dasharray="2 2"/><path d="M1.500 18h3v3h-3zM17 9h3v3h-3z" fill="#fff" stroke="#777"/><g font-family="Noto Sans" font-weight="700" font-size="10" fill="#333"><text x="0" y="13">a</text><text x="8" y="9">b</text><text x="17" y="8">c</text></g><use href="#badd"/></symbol>
<symbol id="call" viewBox="0 0 24 24"><path d="M1.500 1.500h21v16H9l-7 5 2-5H1.500z" fill="#e9f1f7" stroke="#7b8794"/><text x="6.500" y="15" font-family="Liberation Serif" font-size="16" fill="#222" stroke="#222" stroke-width=".4">T</text></symbol>
<symbol id="scale" viewBox="0 0 24 24"><path d="M1.500 4.500h21v8h-21z" fill="#b9d0ea" stroke="#34577f" stroke-width="1.500"/><path d="M8 1.500h5v14H8zM13 5h4v7h-4z" fill="#8fb3da" stroke="#34577f" stroke-width="1.300"/></symbol>
<symbol id="cross" viewBox="0 0 24 24"><circle cx="12" cy="12" r="8" fill="none" stroke="#555" stroke-width="1.300"/><path d="M12 1v22M1 12h22" stroke="#777" stroke-width="2.200"/><path d="M8 8h8v8H8z" fill="none" stroke="#888"/></symbol>
<symbol id="adv" viewBox="0 0 24 24"><path d="M2 2h15v15H2z" fill="#eee" stroke="#666" stroke-width="1.300"/><circle cx="12" cy="12" r="7" fill="none" stroke="#47698f" stroke-width="1.400"/><path d="M12 2v20M2 12h20" stroke="#5387c2" stroke-width="2"/><path d="M19.500 21H24l-2.300 3z" fill="#222"/></symbol>
<symbol id="adv2" viewBox="0 0 24 24"><circle cx="9" cy="9" r="6.500" fill="none" stroke="#555" stroke-width="1.400"/><path d="M9 0v18M0 9h18" stroke="#555" stroke-width="1.600"/><path d="m2 22 20-19" stroke="#777" stroke-dasharray="2 2"/><use href="#badd"/></symbol>
<symbol id="gvee" viewBox="0 0 24 24"><use href="#vee" stroke="#7fb07f" stroke-width="2.500"/><path d="M1.500 1.500h4v4h-4zM7 14h4v4H7zM13 2.500h4v4h-4zM19 2h4v4h-4z" fill="#ccc" stroke="#777"/><use href="#bnew"/></symbol>
<symbol id="trace" viewBox="0 0 24 24"><path d="M3 3v12c4 6 8 6 12 5" fill="none" stroke="#555" stroke-dasharray="2 2"/><path d="M1.500 1.500h3v3h-3z" fill="#eee" stroke="#555"/><path d="m10 6 6 5 2-1 5 11-9-4 1-3-6-6z" fill="#a99" stroke="#777"/></symbol>
<symbol id="info" viewBox="0 0 24 24"><circle cx="12" cy="12" r="10.500" fill="#6d97c4" stroke="#34577f"/><text x="9" y="18.500" font-family="Liberation Serif" font-style="italic" font-weight="700" font-size="19" fill="#fff">i</text></symbol>
<symbol id="wrench" viewBox="0 0 24 24"><path d="m10 10 12 12" stroke="#5e5430" stroke-width="5" stroke-linecap="round"/><path d="m12 12 9.500 9.500" stroke="#eed88a" stroke-width="3"/><path d="M4 1c5-1 8 3 7 7l3 4-3 2-3-3C3 12 0 9 1 5l4 3 2-2z" fill="#e3e3e3" stroke="#555"/></symbol>

<symbol id="madd" viewBox="0 0 16 16"><path d="M1.500 1.500h12v11h-12z" fill="#f4f4f4" stroke="#888" stroke-width="1.300"/><circle cx="12.500" cy="12.500" r="3" fill="#5a8c5a"/><path d="M12.500 11v3M11 12.500h3" stroke="#fff"/></symbol>
<symbol id="mfun" viewBox="0 0 16 16"><path d="M1 2.500h14L10 8.500V16l-4-2V8.500z" fill="#6d97c4" stroke="#47698f"/><path d="M1 1h14v2.500H1z" fill="#fce94f" stroke="#b8940c" stroke-width=".6"/></symbol>
<symbol id="mcol" viewBox="0 0 16 16"><path d="M1 1v14M1 1h6" fill="none" stroke="#888"/><path d="M3.500 5h3v3h-3zM3.500 11h3v3h-3z" fill="#fff" stroke="#f08c00"/><path d="m11 1 4.500 5H13v9H9V6H6.500z" fill="#6d97c4" stroke="#34577f"/></symbol>
<symbol id="mexp" viewBox="0 0 16 16"><path d="M1 1v14M1 1h14" fill="none" stroke="#888"/><path d="M3.500 4h3v3h-3zM3.500 11h3v3h-3z" fill="#fff" stroke="#f08c00"/><path d="m11 15 4.500-5H13V2H9v8H6.500z" fill="#6d97c4" stroke="#34577f"/></symbol>
<symbol id="mbrush" viewBox="0 0 16 16"><path d="m9 8 6-6" stroke="#d9951c" stroke-width="2.500"/><path d="m7 4 5 5-2 2-5-5z" fill="#f3c52c"/><path d="m5 6 5 5-3 4-6-5z" fill="#e4572e"/><path d="m3 8 2 6-4-4z" fill="#5387c2"/></symbol>
<symbol id="mgrp" viewBox="0 0 16 16"><path d="M1 7v8h9M4 4v8h9M4 4h2M7 2v9h6V2zM10 2V0" fill="none" stroke="#777" stroke-width="1.300"/><path d="M9 2h2v9H9z" fill="#8fb3da"/><rect x="9.500" y="9.500" width="6.500" height="6.500" rx="1" fill="#5a8c5a"/><path d="M12.700 10.800v4M10.700 12.700h4" stroke="#fff"/></symbol>
<symbol id="meye" viewBox="0 0 16 16"><path d="M0 8q7-7 14 0-7 6-14 0z" fill="#fff" stroke="#888"/><circle cx="7" cy="7.500" r="3" fill="#5387c2"/><circle cx="7" cy="7.500" r="1.300" fill="#222"/><path d="M11 13h5l-2.500 3z" fill="#444"/></symbol>
<symbol id="mfilt" viewBox="0 0 16 16"><use href="#mfun" width="14" height="14"/><path d="M11 13h5l-2.500 3z" fill="#444"/></symbol>
<symbol id="meps" viewBox="0 0 16 16"><text x="0" y="11" font-family="Liberation Serif" font-weight="700" font-size="19" fill="#7a3b80">ε</text><path d="M8 9h8l-2 3v4h-1v-5h-2v5h-1v-4z" fill="#aaa"/></symbol>
<symbol id="mrem" viewBox="0 0 16 16"><path d="M1.500 1.500h12v11h-12z" fill="#f4f4f4" stroke="#888" stroke-width="1.300"/><rect x="9" y="11" width="7" height="4" rx="1.500" fill="#e4444e"/><path d="M10.500 13h4" stroke="#fff"/></symbol>
<symbol id="float" viewBox="0 0 12 12"><rect x=".7" y=".7" width="10.600" height="10.600" rx="2" fill="none" stroke="#555"/><path d="M5 2.500h4.500V7H5zM2.500 5H7v4.500H2.500z" fill="#efefef" stroke="#666"/></symbol>
<symbol id="closex" viewBox="0 0 12 12"><rect x=".7" y=".7" width="10.600" height="10.600" rx="2" fill="none" stroke="#555"/><path d="m3 3 6 6M9 3 3 9" stroke="#444" stroke-width="2.200"/></symbol>
<symbol id="tzip" viewBox="0 0 16 16"><path d="M1.500 1.500h13v13h-13z" fill="#f1f1f0" stroke="#777"/><path d="M7 2v8M9 3v7" stroke="#333" stroke-width="1.500" stroke-dasharray="1 1"/><path d="M6 9h4v5H6z" fill="#eee" stroke="#333"/></symbol>
<symbol id="tfold" viewBox="0 0 16 16"><use href="#gfold"/></symbol>
<symbol id="tfoldo" viewBox="0 0 16 16"><path d="M1 1h6l1 2h7v2.500H1z" fill="#777"/><path d="M1.500 15V5h6l1.500 2h5.500v8z" fill="#f1f1f0" stroke="#8c8c8c"/></symbol>
<symbol id="tdb" viewBox="0 0 16 16"><path d="M2.500 3.500v9.500c0 2.500 11 2.500 11 0V3.500" fill="#f1f1f0" stroke="#777"/><ellipse cx="8" cy="3.500" rx="5.500" ry="2" fill="#fff" stroke="#777"/><path d="M2.500 7c0 2.500 11 2.500 11 0M2.500 10c0 2.500 11 2.500 11 0" fill="none" stroke="#777"/></symbol>
<symbol id="tpt" viewBox="0 0 16 16"><g fill="#fff" stroke="#777"><circle cx="6" cy="5.500" r="1.200"/><circle cx="13" cy="2.500" r="1.200"/><circle cx="3.500" cy="12" r="1.200"/></g></symbol>
<symbol id="tln" viewBox="0 0 16 16"><path d="M1.500 3 6 13.500 10.500 3 15 2" fill="none" stroke="#888"/><g fill="#fff" stroke="#888"><circle cx="1.500" cy="3" r="1"/><circle cx="6" cy="13.500" r="1"/><circle cx="10.500" cy="2.500" r="1"/><circle cx="14.500" cy="2" r="1"/></g></symbol>
<symbol id="tpg" viewBox="0 0 16 16"><path d="M1 4c0-4 4-2 7-2s7-1 7 2v4c-2 3-4-1-6 0s-7 4-8 1z" fill="#e4e4e4" stroke="#777"/></symbol>
<symbol id="tmix" viewBox="0 0 16 16"><path d="M3 13 7 3l6-1.500M1.500 3h1" fill="none" stroke="#888"/><circle cx="1.800" cy="3" r="1.100" fill="#fff" stroke="#888"/><circle cx="3" cy="13" r="1.100" fill="#fff" stroke="#888"/><path d="M6 14c0-6 4-8 8-8 2 4 0 8-4 8z" fill="#eee" stroke="#777"/></symbol>
<symbol id="cglass" viewBox="0 0 16 16"><path d="M0 1.500 3 3M16 1.500 13 3M6 3h4" stroke="#222" stroke-width="1.500"/><path d="M1.500 2.500h5v2q-2.500 4-5 0zM9.500 2.500h5v2q-2.500 4-5 0z" fill="#fff" stroke="#222" stroke-width="1.500"/><rect x="9" y="9" width="6.500" height="6.500" rx="1" fill="#5a8c5a"/><path d="M12.200 10v4.500M10 12.200h4.500" stroke="#fff"/></symbol>
<symbol id="cdup" viewBox="0 0 16 16"><path d="M1.500 4v11h10" fill="none" stroke="#666" stroke-width="2"/><path d="M4.500 1.500h10v11h-10z" fill="#eee" stroke="#777" stroke-width="1.300"/><path d="M10 9h5v6h-5z" fill="#f3d94f" stroke="#b8940c"/></symbol>
<symbol id="clab" viewBox="0 0 16 16"><path d="m.7 8 3-3.800h11.600v7.600H3.700z" fill="#f5dc3c" stroke="#b8940c"/><text x="4" y="10.500" font-family="Liberation Serif" font-weight="700" font-size="7" fill="#444">abc</text></symbol>
<symbol id="srch" viewBox="0 0 16 16"><circle cx="6.500" cy="6.500" r="5" fill="none" stroke="currentColor" stroke-width="1.600"/><path d="m10 10 5 5" stroke="currentColor" stroke-width="1.800"/></symbol>
</defs></svg>

<div class="vh-100 d-flex flex-column overflow-hidden position-relative">
<header class="titlebar d-flex align-items-center">
  <svg width="16" height="16" viewBox="0 0 24 24"><circle cx="11.500" cy="11.500" r="8.500" fill="none" stroke="#6aa329" stroke-width="5"/><path d="m12 12 10 10" stroke="#93c03c" stroke-width="4.500"/><path d="M10 10h5v5h-5z" fill="#f08a24"/></svg>
  <span class="ms-2 me-auto">*无标题工程 — QGIS</span>
  <button class="winbtn" aria-label="最小化"><svg width="12" height="12"><path d="M1 5.500h10" stroke="#222"/></svg></button>
  <button class="winbtn" aria-label="还原"><svg width="12" height="12"><path d="M1.500 3.500h7v7h-7zM3.500 1.500h7v7" fill="none" stroke="#222"/></svg></button>
  <button class="winbtn" aria-label="关闭"><svg width="12" height="12"><path d="m1 1 10 10M11 1 1 11" stroke="#222"/></svg></button>
</header>
<nav class="menubar d-flex">
  <a href="#">工程(<u>J</u>)</a><a href="#">编辑(<u>E</u>)</a><a href="#">视图(<u>V</u>)</a><a href="#">图层(<u>L</u>)</a><a href="#">设置(<u>S</u>)</a><a href="#">插件(<u>P</u>)</a><a href="#">矢量(<u>O</u>)</a><a href="#">栅格(<u>R</u>)</a><a href="#">数据库(<u>D</u>)</a><a href="#">Web(<u>W</u>)</a><a href="#">网孔(<u>M</u>)</a><a href="#">数据处理(<u>C</u>)</a><a href="#">帮助(<u>H</u>)</a>
</nav>

<div class="toolrow d-flex gap-1">
  <div class="d-flex align-items-center"><i class="grip"></i>
    <button class="tb" aria-label="新建"><svg><use href="#new"/></svg></button><button class="tb" aria-label="打开"><svg><use href="#open"/></svg></button><button class="tb" aria-label="保存"><svg><use href="#save"/></svg></button><button class="tb" aria-label="新建布局"><svg><use href="#layout"/></svg></button><button class="tb" aria-label="布局管理"><svg><use href="#layman"/></svg></button><button class="tb" aria-label="样式管理"><svg><use href="#style"/></svg></button></div>
  <div class="d-flex align-items-center"><i class="grip"></i>
    <button class="tb pressed" aria-label="平移"><svg><use href="#hand"/></svg></button><button class="tb" aria-label="平移到所选"><svg><use href="#panto"/></svg></button><button class="tb" aria-label="放大"><svg><use href="#zin"/></svg></button><button class="tb" aria-label="缩小"><svg><use href="#zout"/></svg></button><button class="tb" aria-label="全图"><svg><use href="#zfull"/></svg></button><button class="tb" aria-label="缩放到所选"><svg><use href="#zsel"/></svg></button><button class="tb" aria-label="缩放到图层"><svg><use href="#zlay"/></svg></button><button class="tb off" aria-label="原始比例"><svg><use href="#z11"/></svg></button><button class="tb" aria-label="上一视图"><svg><use href="#zlast"/></svg></button><button class="tb off" aria-label="下一视图"><svg><use href="#znext"/></svg></button><button class="tb" aria-label="新建地图视图"><svg><use href="#nmap"/></svg></button><button class="tb" aria-label="新建3D视图"><svg><use href="#n3d"/></svg></button><button class="tb" aria-label="新建书签"><svg><use href="#nbm"/></svg></button><button class="tb" aria-label="显示书签"><svg><use href="#sbm"/></svg></button><button class="tb" aria-label="时态控制"><svg><use href="#clock"/></svg></button><button class="tb" aria-label="刷新"><svg><use href="#ref"/></svg></button></div>
  <div class="d-flex align-items-center"><i class="grip"></i>
    <button class="tb" aria-label="识别要素"><svg><use href="#ident"/></svg></button><button class="tb" aria-label="字段计算"><svg><use href="#abac"/></svg></button><button class="tb" aria-label="工具箱"><svg><use href="#gear"/></svg></button><button class="tb" aria-label="统计"><svg><use href="#sum"/></svg></button><button class="tb drop" aria-label="属性表"><svg><use href="#table"/></svg></button><button class="tb drop" aria-label="测量"><svg><use href="#meas"/></svg></button><button class="tb" aria-label="地图提示"><svg><use href="#tip"/></svg></button><button class="tb drop off" aria-label="动作"><svg><use href="#run"/></svg></button></div>
</div>
<div class="toolrow d-flex gap-1">
  <div class="d-flex align-items-center"><i class="grip"></i>
    <button class="tb" aria-label="数据源管理"><svg><use href="#dsm"/></svg></button><button class="tb" aria-label="新建GeoPackage"><svg><use href="#geopk"/></svg></button><button class="tb" aria-label="新建Shapefile"><svg><use href="#nshp"/></svg></button><button class="tb" aria-label="新建SpatiaLite"><svg><use href="#feath"/></svg></button><button class="tb" aria-label="临时图层"><svg><use href="#chip"/></svg></button><button class="tb" aria-label="网孔图层"><svg><use href="#mesh"/></svg></button><button class="tb" aria-label="GPX图层"><svg><use href="#gpx"/></svg></button></div>
  <div class="d-flex align-items-center"><i class="grip"></i>
    <button class="tb off" aria-label="当前编辑"><svg><use href="#pens"/></svg></button><button class="tb off" aria-label="切换编辑"><svg><use href="#pen"/></svg></button><button class="tb off" aria-label="保存编辑"><svg><use href="#saveed"/></svg></button><button class="tb drop off" aria-label="线段"><svg><use href="#lin"/></svg></button><button class="tb off" aria-label="添加要素"><svg><use href="#vtx"/></svg></button><button class="tb drop off" aria-label="顶点工具"><svg><use href="#vtool"/></svg></button><button class="tb off" aria-label="批量修改"><svg><use href="#multi"/></svg></button><button class="tb off" aria-label="删除"><svg><use href="#trash"/></svg></button><button class="tb off" aria-label="剪切"><svg><use href="#cut"/></svg></button><button class="tb off" aria-label="复制"><svg><use href="#copy"/></svg></button><button class="tb off" aria-label="粘贴"><svg><use href="#paste"/></svg></button><button class="tb off" aria-label="撤销"><svg><use href="#undo"/></svg></button><button class="tb off" aria-label="重做"><svg><use href="#redo"/></svg></button></div>
  <div class="d-flex align-items-center"><i class="grip"></i>
    <button class="tb" aria-label="标注"><svg><use href="#lab"/></svg></button><button class="tb" aria-label="图表"><svg><use href="#diag"/></svg></button><i class="tsep"></i><button class="tb" aria-label="固定标注"><svg><use href="#pin"/></svg></button><button class="tb" aria-label="未放置标注"><svg><use href="#labr"/></svg></button><i class="tsep"></i><button class="tb off" aria-label="固定"><svg><use href="#pin"/></svg></button><button class="tb off" aria-label="显示隐藏"><svg><use href="#laby"/></svg></button><button class="tb off" aria-label="移动标注"><svg><use href="#labx"/></svg></button><button class="tb off" aria-label="旋转标注"><svg><use href="#labrot"/></svg></button><button class="tb off" aria-label="修改标注"><svg><use href="#labed"/></svg></button></div>
  <div class="d-flex align-items-center"><i class="grip"></i>
    <button class="tb" aria-label="添加网络图层"><svg><use href="#wadd"/></svg></button><button class="tb" aria-label="搜索网络图层"><svg><use href="#wfind"/></svg></button><button class="tb" aria-label="目录"><svg><use href="#wbin"/></svg></button></div>
  <div class="d-flex align-items-center"><i class="grip"></i><button class="tb" aria-label="Python"><svg><use href="#py"/></svg></button></div>
  <div class="d-flex align-items-center"><i class="grip"></i><button class="tb" aria-label="帮助"><svg><use href="#help"/></svg></button></div>
  <div class="d-flex align-items-center"><i class="grip"></i></div>
</div>
<div class="toolrow d-flex gap-1">
  <div class="d-flex align-items-center"><i class="grip"></i>
    <button class="tb off" aria-label="局部拉伸"><svg><use href="#h1"/></svg></button><button class="tb off" aria-label="全局拉伸"><svg><use href="#h2"/></svg></button><button class="tb off" aria-label="局部直方图"><svg><use href="#h3"/></svg></button><button class="tb off" aria-label="全局直方图"><svg><use href="#h2"/></svg></button><button class="tb off" aria-label="增加亮度"><svg><use href="#su"/></svg></button><button class="tb off" aria-label="降低亮度"><svg><use href="#sd"/></svg></button><button class="tb off" aria-label="增加对比度"><svg><use href="#cu"/></svg></button><button class="tb off" aria-label="降低对比度"><svg><use href="#cd"/></svg></button><button class="tb off" aria-label="增加伽马"><svg><use href="#gu"/></svg></button><button class="tb off" aria-label="降低伽马"><svg><use href="#gd"/></svg></button></div>
</div>
<div class="toolrow d-flex gap-1">
  <div class="d-flex align-items-center"><i class="grip"></i>
    <button class="tb drop" aria-label="选择要素"><svg><use href="#sel"/></svg></button><button class="tb drop" aria-label="按值选择"><svg><use href="#selv"/></svg></button><button class="tb drop" aria-label="取消选择"><svg><use href="#desel"/></svg></button><button class="tb drop" aria-label="按位置选择"><svg><use href="#selloc"/></svg></button></div>
  <div class="d-flex align-items-center"><i class="grip"></i>
    <button class="tb off" aria-label="编辑网孔"><svg><use href="#mesh1"/></svg></button><button class="tb drop off" aria-label="选择网孔"><svg><use href="#mesh2"/></svg></button><button class="tb off" aria-label="变换网孔"><svg><use href="#mesh3"/></svg></button><button class="tb drop off" aria-label="强制断线"><svg><use href="#mesh4"/></svg></button></div>
  <div class="d-flex align-items-center"><i class="grip"></i>
    <button class="tb drop" aria-label="注记图层"><svg><use href="#anno"/></svg></button><button class="tb" aria-label="修改注记"><svg><use href="#ansel"/></svg></button><button class="tb" aria-label="面注记"><svg><use href="#anpoly"/></svg></button><button class="tb" aria-label="线注记"><svg><use href="#anlin"/></svg></button><button class="tb" aria-label="点注记"><svg><use href="#star"/></svg></button><button class="tb" aria-label="文本注记"><svg><use href="#ant"/></svg></button><button class="tb" aria-label="沿线文本"><svg><use href="#antl"/></svg></button><i class="tsep"></i><button class="tb drop" aria-label="气泡注记"><svg><use href="#call"/></svg></button></div>
  <div class="d-flex align-items-center"><i class="grip"></i>
    <button class="tb" aria-label="尺度"><svg><use href="#scale"/></svg></button><button class="tb off" aria-label="中心"><svg><use href="#cross"/></svg></button><i class="tsep"></i><button class="tb" aria-label="高级数字化"><svg><use href="#adv"/></svg></button><button class="tb off" aria-label="构造"><svg><use href="#adv2"/></svg></button><button class="tb" aria-label="新建折线"><svg><use href="#gvee"/></svg></button><button class="tb off" aria-label="追踪"><svg><use href="#trace"/></svg></button><i class="tsep"></i><button class="tb" aria-label="信息"><svg><use href="#info"/></svg></button><button class="tb" aria-label="设置"><svg><use href="#wrench"/></svg></button></div>
</div>

<main class="flex-grow-1 d-flex overflow-hidden">
  <aside class="dock d-flex flex-column">
    <div class="dockhead h-a d-flex align-items-center"><span class="me-auto">浏览器</span><button class="me-1" aria-label="浮动"><svg width="11" height="11"><use href="#float"/></svg></button><button aria-label="关闭面板"><svg width="11" height="11"><use href="#closex"/></svg></button></div>
    <div class="dockbar h-a d-flex align-items-center">
      <button class="mini" aria-label="添加图层"><svg><use href="#madd"/></svg></button><button class="mini" aria-label="刷新"><svg><use href="#ref"/></svg></button><button class="mini" aria-label="过滤"><svg><use href="#mfun"/></svg></button><button class="mini" aria-label="折叠"><svg><use href="#mcol"/></svg></button><button class="mini" aria-label="属性"><svg><use href="#info"/></svg></button></div>
    <div class="panelbox grow-a d-flex">
      <div class="tree flex-grow-1">
        <div class="trow lv1 d-flex align-items-center"><i class="tw"></i><svg><use href="#tzip"/></svg><span>Redis.zip</span></div>
        <div class="trow lv0 d-flex align-items-center"><i class="tw open"></i><svg><use href="#tfoldo"/></svg><span>E:\</span></div>
        <div class="trow lv1 d-flex align-items-center"><i class="tw"></i><svg><use href="#tfold"/></svg><span>20231030沈堪</span></div>
        <div class="trow lv1 d-flex align-items-center"><i class="tw"></i><svg><use href="#tfold"/></svg><span>Autodesk</span></div>
        <div class="trow lv1 d-flex align-items-center"><i class="tw"></i><svg><use href="#tfold"/></svg><span>BaiduNetdiskDownload</span></div>
        <div class="trow lv1 d-flex align-items-center"><i class="tw open"></i><svg><use href="#tfoldo"/></svg><span>cadData</span></div>
        <div class="trow lv2 d-flex align-items-center"><i class="tw"></i><svg><use href="#tfold"/></svg><span>download</span></div>
        <div class="trow lv2 d-flex align-items-center"><i class="tw"></i><svg><use href="#tdb"/></svg><span>111.dwg</span></div>
        <div class="trow lv2 d-flex align-items-center"><i class="tw"></i><svg><use href="#tdb"/></svg><span>111.dxf</span></div>
        <div class="trow lv2 d-flex align-items-center"><i class="tw open"></i><svg><use href="#tdb"/></svg><span>2000.dxf</span></div>
        <div class="trow lv3 d-flex align-items-center"><i class="tw"></i><svg><use href="#tpt"/></svg><span>entities</span></div>
        <div class="trow lv3 cur d-flex align-items-center"><i class="tw"></i><svg><use href="#tln"/></svg><span>entities</span></div>
        <div class="trow lv3 d-flex align-items-center"><i class="tw"></i><svg><use href="#tpg"/></svg><span>entities</span></div>
        <div class="trow lv3 d-flex align-items-center"><i class="tw"></i><svg><use href="#tmix"/></svg><span>entities</span></div>
        <div class="trow lv2 d-flex align-items-center"><i class="tw"></i><svg><use href="#tdb"/></svg><span>2004.dxf</span></div>
        <div class="trow lv2 d-flex align-items-center"><i class="tw"></i><svg><use href="#tdb"/></svg><span>2007.dxf</span></div>
        <div class="trow lv2 d-flex align-items-center"><i class="tw"></i><svg><use href="#tdb"/></svg><span>2010.dxf</span></div>
        <div class="trow lv2 d-flex align-items-center"><i class="tw"></i><svg><use href="#tdb"/></svg><span>r12.dxf</span></div>
        <div class="trow lv2 d-flex align-items-center"><i class="tw"></i><svg><use href="#tmix"/></svg><span>SIMPLEX.SHP</span></div>
        <div class="trow lv1 d-flex align-items-center"><i class="tw"></i><svg><use href="#tfold"/></svg><span>code</span></div>
      </div>
      <div class="vscroll d-flex flex-column"><button class="up" aria-label="向上"></button><i class="vgap-a"></i><i class="vthumb"></i><i class="vgap-b"></i><button class="dn" aria-label="向下"></button></div>
    </div>
    <div class="split"><i></i></div>
    <div class="dockhead h-b d-flex align-items-center"><span class="me-auto">图层</span><button class="me-1" aria-label="浮动"><svg width="11" height="11"><use href="#float"/></svg></button><button aria-label="关闭面板"><svg width="11" height="11"><use href="#closex"/></svg></button></div>
    <div class="dockbar h-b d-flex align-items-center">
      <button class="mini" aria-label="图层样式"><svg><use href="#mbrush"/></svg></button><button class="mini" aria-label="添加组"><svg><use href="#mgrp"/></svg></button><button class="mini" aria-label="地图主题"><svg><use href="#meye"/></svg></button><button class="mini" aria-label="过滤图例"><svg><use href="#mfilt"/></svg></button><button class="mini" aria-label="表达式过滤"><svg><use href="#meps"/></svg></button><i class="caret d-flex pe-1"></i><button class="mini" aria-label="全部展开"><svg><use href="#mexp"/></svg></button><button class="mini" aria-label="全部折叠"><svg><use href="#mcol"/></svg></button><button class="mini" aria-label="移除图层"><svg><use href="#mrem"/></svg></button></div>
    <div class="panelbox grow-b">
      <div class="layer d-flex align-items-center"><input class="tick" type="checkbox" id="lyr" checked><svg class="ms-2" width="16" height="16"><use href="#tln"/></svg><label for="lyr" class="ms-1 me-auto fw-bold text-decoration-underline">entities</label>
        <svg width="18" height="18" viewBox="0 0 18 18"><path d="M0 0h18v18H0z" fill="#eee"/><circle cx="9" cy="9" r="7" fill="#ccc"/><text x="5" y="14" font-family="Noto Sans" font-weight="700" font-size="14" fill="#444">?</text></svg></div>
    </div>
  </aside>
  <section class="flex-grow-1 d-flex flex-column">
    <div class="msgbar d-flex align-items-center">
      <svg width="20" height="19" viewBox="0 0 18 18"><path d="M9 1.500 17 16.500H1z" fill="#ffc800" stroke="#7a4a10" stroke-width="1.300"/><path d="M9 6v6M9 13v2" stroke="#7a4a10" stroke-width="1.600"/></svg>
      <span class="song me-auto ms-2 ps-1 pt-1">Open Sans <b>字体安装失败</b></span>
      <svg width="14" height="20" viewBox="0 0 14 20" class="me-1"><path d="M.5 9V1.500H13M.5 19v-7.500H13" fill="none" stroke="#fff0b8"/><path d="M0 8.500h13.500V1M0 18.500h13.500V11" fill="none" stroke="#777"/><path d="M6 5h2M6 15h2" stroke="#b48a00" stroke-width="2"/></svg>
      <button class="msgbtn">查看错误</button>
      <button class="ms-4 ps-2" aria-label="关闭消息"><svg width="17" height="17" viewBox="0 0 17 17"><circle cx="8.500" cy="8.500" r="8.300" fill="#3b2f05"/><path d="m5 5 7 7M12 5l-7 7" stroke="#fff" stroke-width="2.400"/></svg></button>
    </div>
    <div class="mapview flex-grow-1">
      <svg width="100%" height="100%" viewBox="300 229 1619 894" fill="none" stroke-linejoin="round">
        <g transform="translate(590 230) scale(.3333)">
          <path d="M57 60 103 93 120 100 198 98 212 108 222 123 228 165 240 180 285 228 332 275 342 297 350 330 360 355 384 372 400 388 408 405 413 435 420 450 428 460 455 473 505 490 517 505 530 530 545 548 565 562 590 572 600 588 604 610 612 630 625 637 678 645 690 656 700 675 712 702 730 726 750 745 800 773 865 805 885 811 905 812 965 804 992 804 1007 810 1030 835 1055 880 1080 930 1095 952 1115 962 1165 956 1220 944 1240 948 1275 978 1320 1015" stroke="#ff4fa8" stroke-width="7"/>
          <path d="M57 60 103 93 120 100 198 98 212 108 222 123 228 165 240 180 285 228 332 275 342 297 350 330 360 355 384 372 400 388 408 405 413 435 420 450 428 460 455 473 505 490 517 505 530 530 545 548 565 562 590 572 600 588 604 610 612 630 625 637 678 645 690 656 700 675 712 702 730 726 750 745 800 773 865 805 885 811 905 812 965 804 992 804 1007 810 1030 835 1055 880 1080 930 1095 952" stroke="#f24fe0" stroke-width="10" stroke-dasharray="5 19 9 25 6 14"/>
          <path d="M57 60 85 78M203 100 222 123M1055 875 1083 935M1095 950 1118 962M1270 975 1320 1017" stroke="#f0f" stroke-width="6"/>
          <path d="M100 98h34l23 20M228 168l10 18 10-8M898 824l52-3M1080 963l28 32 34-3M1053 880v22l22 22M1060 877l22 18-12 22M585 580l10 26M350 320v25l14 18" stroke="#ee6f87" stroke-width="4"/>
          <path d="M412 430l5 15M440 466l22 8M1222 942l22 9 14 14" stroke="#b98080" stroke-width="6"/>
          <path d="M107 87h10M955 812h6M1164 958h9M1258 968l6 4" stroke="#222" stroke-width="5"/>
          <path d="M350 274h4M387 396h4M534 583h4M690 687h4M1128 960v8M1165 958v10M1290 1003h8" stroke="#f6f" stroke-width="4"/>
        </g>
        <g transform="translate(920 520) scale(.3333 .3635)">
          <path d="M270 90 300 110 338 140" stroke="#f0f" stroke-width="6"/>
          <path d="M335 138 355 160 385 195 400 230" stroke="#a87fa8" stroke-width="3"/>
          <path d="M400 230 425 275 435 305 440 335 450 400 460 432 475 465 497 498 520 535 545 580 555 600 562 628 570 652 582 670 605 683 630 700 642 718 648 740 648 770 643 805 635 830 615 855 585 880 572 898 564 920 565 950 570 975 578 1000 610 1080 655 1185 700 1285 720 1333 745 1390 800 1515" stroke="#ff4fa8" stroke-width="7"/>
          <path d="M400 230 425 275 435 305 440 335 450 400 460 432 475 465 497 498 520 535 545 580 555 600 562 628 570 652 582 670 605 683 630 700 642 718 648 740 648 770 643 805 635 830 615 855 585 880 572 898 564 920 565 950 570 975 578 1000 610 1080 655 1185 700 1285" stroke="#f24fe0" stroke-width="10" stroke-dasharray="5 21 9 28 6 16"/>
          <path d="M720 1333 745 1390 798 1512" stroke="#a0109c" stroke-width="7"/><path d="M718 1325 742 1385M765 1430l8 22M645 765v32" stroke="#f0f" stroke-width="8"/>
          <path d="M350 157v10l20 12 22-6-10 22-12-16M379 190v18h8v-14M298 124l10-6M458 413h6v8h-6zM427 302h5v16h-5" stroke="#f3f" stroke-width="3.500"/>
          <path d="M358 183h53" stroke="#a65aa6" stroke-width="3"/>
          <path d="M342 130 368 152M454 463h22M474 448v20M566 910l20-2M643 1191l30-11M628 770h14v14h-12zv16" stroke="#ee4f90" stroke-width="5"/>
          <path d="M452 400 482 394M448 403l-5 5 4 7M424 275h10M590 1022l8 4M708 1298l8 6M600 678l9 3M565 914l6 6" stroke="#222" stroke-width="4"/>
          <path d="M452 405 470 455" stroke="#7b2355" stroke-width="4"/><path d="M580 669 596 678M606 683 622 692M520 564h14M242 70l20 14" stroke="#998" stroke-width="6"/>
          <path d="M628 792h10l14 12M725 1333l22 4" stroke="#f11" stroke-width="5"/>
          <path d="M742 1325h6" stroke="#0a2" stroke-width="5"/><path d="M796 1510l4 6" stroke="#6cf" stroke-width="6"/><path d="M803 1515h9M408 212h5M417 323h4M606 1048h5M629 727h5M630 854h5M713 1265h4" stroke="#f6f" stroke-width="4"/>
        </g>
      </svg>
    </div>
  </section>
</main>

<footer class="statusbar d-flex align-items-center">
  <div class="fld quick d-flex align-items-center me-auto ps-2"><svg width="13" height="13" color="#888"><use href="#srch"/></svg><input class="zh ms-1" aria-label="搜索" placeholder="搜索 (Ctrl+K)"></div>
  <label class="s11 me-1" for="xy">坐标</label><span class="fld d-flex"><input id="xy" class="w-xy" value="26° , -72°"></span>
  <button class="me-1 px-1" aria-label="范围"><svg width="16" height="16" viewBox="0 0 16 16"><path d="M1 3l4-2 10 13M1 11l10-8M4 14l9-7M2 6l9 9" fill="none" stroke="#333" stroke-width="1.500"/><circle cx="7" cy="8" r="3.500" fill="#777" stroke="#222"/></svg></button>
  <label class="s11 ms-1 me-1" for="sc">比例</label><span class="fld d-flex align-items-center"><select id="sc" class="w-sc"><option>1:907622</option></select><i class="caret d-flex px-1 h-100 align-items-center border-start"></i></span>
  <button class="ps-2 pe-1 me-1 ms-1" aria-label="锁定"><svg width="14" height="16" viewBox="0 0 14 16"><path d="M3.500 8V5c0-5 7-5 7 0v3" fill="none" stroke="#777" stroke-width="1.800"/><rect x="1" y="7" width="12" height="9" rx="1" fill="#555"/></svg></button>
  <label class="s11 me-1" for="mg">放大镜</label><span class="fld d-flex"><input id="mg" class="w-sp" value="100%"><span class="spin"><button class="up w-100" aria-label="增大"></button><button class="dn w-100" aria-label="减小"></button></span></span>
  <label class="s11 ms-2 me-2 ps-1" for="rt">旋转角度</label><span class="fld d-flex"><input id="rt" class="w-sp" value="0.0°"><span class="spin"><button class="up w-100" aria-label="增大"></button><button class="dn w-100" aria-label="减小"></button></span></span>
  <input class="tick ms-2 me-1" type="checkbox" id="rd" checked><label class="s11 me-3" for="rd">渲染</label>
  <button class="d-flex align-items-center song"><svg width="15" height="15" viewBox="0 0 22 22" class="me-1"><g stroke="#666" fill="none" stroke-width="2"><circle cx="11" cy="11" r="9.500" fill="#aaa"/><path d="M11 1v20M1 11h20M3 6h16M3 16h16M11 1C4 6 4 16 11 21M11 1c7 5 7 15 0 20"/></g></svg>EPSG:4326</button>
  <button class="ms-4 ps-1" aria-label="消息"><svg width="16" height="16" viewBox="0 0 16 16"><path d="M8 1C3 1 0 3 0 7s3 5.500 7 6l5 3-1-3.500c3-1 5-2.500 5-5.500 0-4-3-6-8-6z" fill="#555"/><path d="M4 7h2M7 7h2M10 7h2" stroke="#fff" stroke-width="2"/></svg></button>
</footer>

<div class="taskbar d-flex">
  <button class="tk" aria-label="开始"><svg viewBox="0 0 24 24"><path d="M.5.5h11v11H.5zM12.500.5h11v11h-11zM.5 12.500h11v11H.5zM12.500 12.500h11v11h-11z" fill="#4cc8f8"/><path d="M12.500 12.500h11v11h-11z" fill="#1ea4f4"/></svg></button>
  <div class="find d-flex align-items-center gap-2"><svg width="15" height="15" color="#fff"><use href="#srch"/></svg><input placeholder="搜索" aria-label="搜索 Windows"></div>
  <button class="tk" aria-label="任务视图"><svg viewBox="0 0 24 24"><path d="M0 7h17v16H0z" fill="#6c6c6c"/><path d="M6 0h18v17H6z" fill="#f4f4f4"/><path d="M6 7h11v10H6z" fill="#b5b5b5"/></svg></button>
  <button class="tk run" aria-label="文件资源管理器"><svg viewBox="0 0 24 24"><path d="M0 2q0-2 2-2h6l3 3h11q2 0 2 2v17H0z" fill="#d99a0b"/><path d="M0 6h24v16H0z" fill="#ffd04f"/><path d="M4 22v-5q0-3 3-3h10q3 0 3 3v5z" fill="#0f78d4"/></svg></button>
  <button class="tk" aria-label="应用"><svg viewBox="0 0 24 24"><rect width="24" height="24" rx="5" fill="#15181b"/><path d="M12 21v-9L5 7v8l4 4V11M12 12l7-5v8l-4 4V11M8 5l4 2 4-2" fill="none" stroke="#a9aeb2" stroke-width="1.500"/></svg></button>
  <button class="tk run after-menu" aria-label="Chrome"><svg viewBox="0 0 24 24"><path d="M12 12 1.600 6A12 12 0 0 1 22.400 6z" fill="#ea4335"/><path d="M12 12 22.400 6A12 12 0 0 1 12 24z" fill="#fbc116"/><path d="M12 12v12A12 12 0 0 1 1.600 6z" fill="#34a853"/><path d="M6 9 1.600 6A12 12 0 0 1 22.400 6H12z" fill="#ea4335"/><circle cx="12" cy="12" r="5.600" fill="#fff"/><circle cx="12" cy="12" r="4.400" fill="#4285f4"/></svg></button>
  <button class="tk run" aria-label="地图搜索"><svg viewBox="0 0 24 24"><circle cx="12" cy="12" r="11.500" fill="#17679e"/><path d="M4 5c5-5 12-4 15 0l-4 5-6 2zM3 14l5 3 3 6C6 22 3 19 3 14z" fill="#4ba05a"/><path d="m14 14 8 8" stroke="#b0743c" stroke-width="3"/><circle cx="11" cy="9" r="6" fill="#c9eef5" fill-opacity=".9" stroke="#e4e9ec" stroke-width="1.500"/></svg></button>
  <button class="tk run" aria-label="浏览器"><svg viewBox="0 0 24 24"><path d="M2 20C-4 6 10-3 22 3c-8-1-15 3-15 14z" fill="#2d62c4"/><path d="M2 13C4 5 12 1 20 4 10 4 5 9 5 18z" fill="#b9d2f7"/><circle cx="14" cy="14" r="8.500" fill="#8d2f12"/><path d="M8 12c2-5 9-5 12-1-3 1-2 6-6 7s-6-2-6-6z" fill="#f6d3bd"/></svg></button>
  <button class="tk run" aria-label="FileZilla"><svg viewBox="0 0 24 24"><path d="M.5.5h23v23H.5z" fill="#b50007" stroke="#e13b3b" stroke-dasharray="1 1"/><path d="M5 19 8 4h9M7 10h7M12 11h7l-7 9h7" fill="none" stroke="#fff" stroke-width="2.800"/></svg></button>
  <button class="tk run" aria-label="WPS"><svg viewBox="0 0 24 24"><path d="M1.500 7h10l2 8 4-8M3 7l5 13 5-9 3 9 6-13h-6" fill="none" stroke="#ff3b1f" stroke-width="3.200"/></svg></button>
  <button class="tk run" aria-label="CAD"><svg viewBox="0 0 24 24"><rect width="24" height="24" rx="2" fill="#41567a"/><path d="M18 4A9 9 0 1 0 18 20M17 7a6 6 0 1 0 0 10M13 12h9M16 12v5M20 12l-2 5" fill="none" stroke="#7fc4e6" stroke-width="1.300"/></svg></button>
  <button class="tk run on" aria-label="QGIS"><svg viewBox="0 0 24 24"><circle cx="11.500" cy="11.500" r="8.500" fill="none" stroke="#86b328" stroke-width="5.500"/><path d="m13 13 10 10" stroke="#6a9b3c" stroke-width="4.500"/><path d="m9 9 7 2-4 5z" fill="#f59a2c"/></svg></button>
  <div class="tray ms-auto d-flex align-items-center gap-2">
    <svg width="10" height="6"><path d="m1 5 4-4 4 4" fill="none" stroke="#fff" stroke-width="1.400"/></svg>
    <span class="fs-6 px-2">中</span>
    <svg width="16" height="14" viewBox="0 0 16 14" fill="none" stroke="#fff" stroke-width="1.500"><path d="M1 5q7-6 14 0M3.500 8q4.500-4 9 0M6 11q2-2 4 0"/></svg>
    <svg width="14" height="14" viewBox="0 0 14 14" fill="none" stroke="#fff" stroke-width="1.200"><path d="M1 5h3l4-3v10L4 9H1zM10 5q2 2 0 4M12 3q3 4 0 8"/></svg>
    <svg width="16" height="14" viewBox="0 0 16 14"><rect x="2" y="3" width="11" height="9" rx="2" fill="none" stroke="#fff" stroke-width="1.400"/><path d="M3.500 7h8v4h-8zM14 6h2v3h-2z" fill="#fff"/></svg>
    <span class="text-end ms-2">13:02<br>2024/7/31</span>
    <svg width="14" height="16" viewBox="0 0 14 16"><path d="M7 0C3 0 2 3 2 6L0 12h14l-2-6c0-3-1-6-5-6zM5 13h4l-2 3z" fill="#8fe0ff"/></svg>
  </div>
</div>
<div class="watermark">CSDN @weixin_42083084</div>

<div class="ctx ctx-main">
  <a class="dropdown-item" href="#"><span class="ic"><svg><use href="#zlay"/></svg></span><span>缩放到图层(<u>Z</u>)</span></a>
  <a class="dropdown-item gray" href="#"><span class="ic off"><svg><use href="#zlay"/></svg></span><span>缩放到选中要素的范围(<u>S</u>)</span></a>
  <a class="dropdown-item" href="#"><span class="ic"><svg><use href="#cglass"/></svg></span><span>在概览图中显示(<u>O</u>)</span></a>
  <label class="dropdown-item"><span class="ic d-grid"><input type="checkbox" class="tick"></span><span>显示要素数量(<u>C</u>)</span></label>
  <a class="dropdown-item" href="#"><span class="ic"><svg><use href="#clab"/></svg></span><span>显示标注(<u>L</u>)</span></a>
  <a class="dropdown-item" href="#"><span class="ic"></span>复制图层</a>
  <a class="dropdown-item" href="#"><span class="ic"></span><span>重命名图层(<u>N</u>)</span></a>
  <div class="rule"></div>
  <a class="dropdown-item" href="#"><span class="ic"><svg><use href="#cdup"/></svg></span><span>再制图层(<u>D</u>)</span></a>
  <a class="dropdown-item" href="#"><span class="ic"><svg><use href="#mrem"/></svg></span><span>移除图层(<u>R</u>)...</span></a>
  <div class="rule"></div>
  <a class="dropdown-item" href="#"><span class="ic"><svg><use href="#table"/></svg></span><span>打开属性表(<u>A</u>)</span></a>
  <a class="dropdown-item" href="#"><span class="ic"></span><span>过滤(<u>F</u>)...</span></a>
  <a class="dropdown-item" href="#"><span class="ic"></span><span>更换数据源(<u>H</u>)...</span></a>
  <div class="rule"></div>
  <a class="dropdown-item" href="#"><span class="ic"></span><span>设置图层可见比例(<u>V</u>)...</span></a>
  <a class="dropdown-item active" href="#"><span class="ic"></span>图层CRS<i class="more"></i></a>
  <div class="rule"></div>
  <a class="dropdown-item" href="#"><span class="ic"></span><span>导出(<u>E</u>)</span><i class="more"></i></a>
  <div class="rule"></div>
  <a class="dropdown-item" href="#"><span class="ic"></span>样式<i class="more"></i></a>
  <a class="dropdown-item" href="#"><span class="ic"></span>添加图层注解...</a>
  <a class="dropdown-item" href="#"><span class="ic"></span><span>属性(<u>P</u>)...</span></a>
</div>
<div class="ctx ctx-sub">
  <a class="dropdown-item gray" href="#">无CRS</a>
  <div class="rule"></div>
  <a class="dropdown-item" href="#">设为 USER:100000</a>
  <a class="dropdown-item" href="#">设为 USER:100001</a>
  <a class="dropdown-item" href="#">设为 EPSG:4508</a>
  <a class="dropdown-item" href="#">设为 USER:100003</a>
  <a class="dropdown-item" href="#">设为 EPSG:4490</a>
  <div class="rule"></div>
  <a class="dropdown-item active" href="#"><span>设置图层CRS(<u>L</u>)...</span></a>
</div>
<div class="redbox"></div>
</div>
</body>
</html>
